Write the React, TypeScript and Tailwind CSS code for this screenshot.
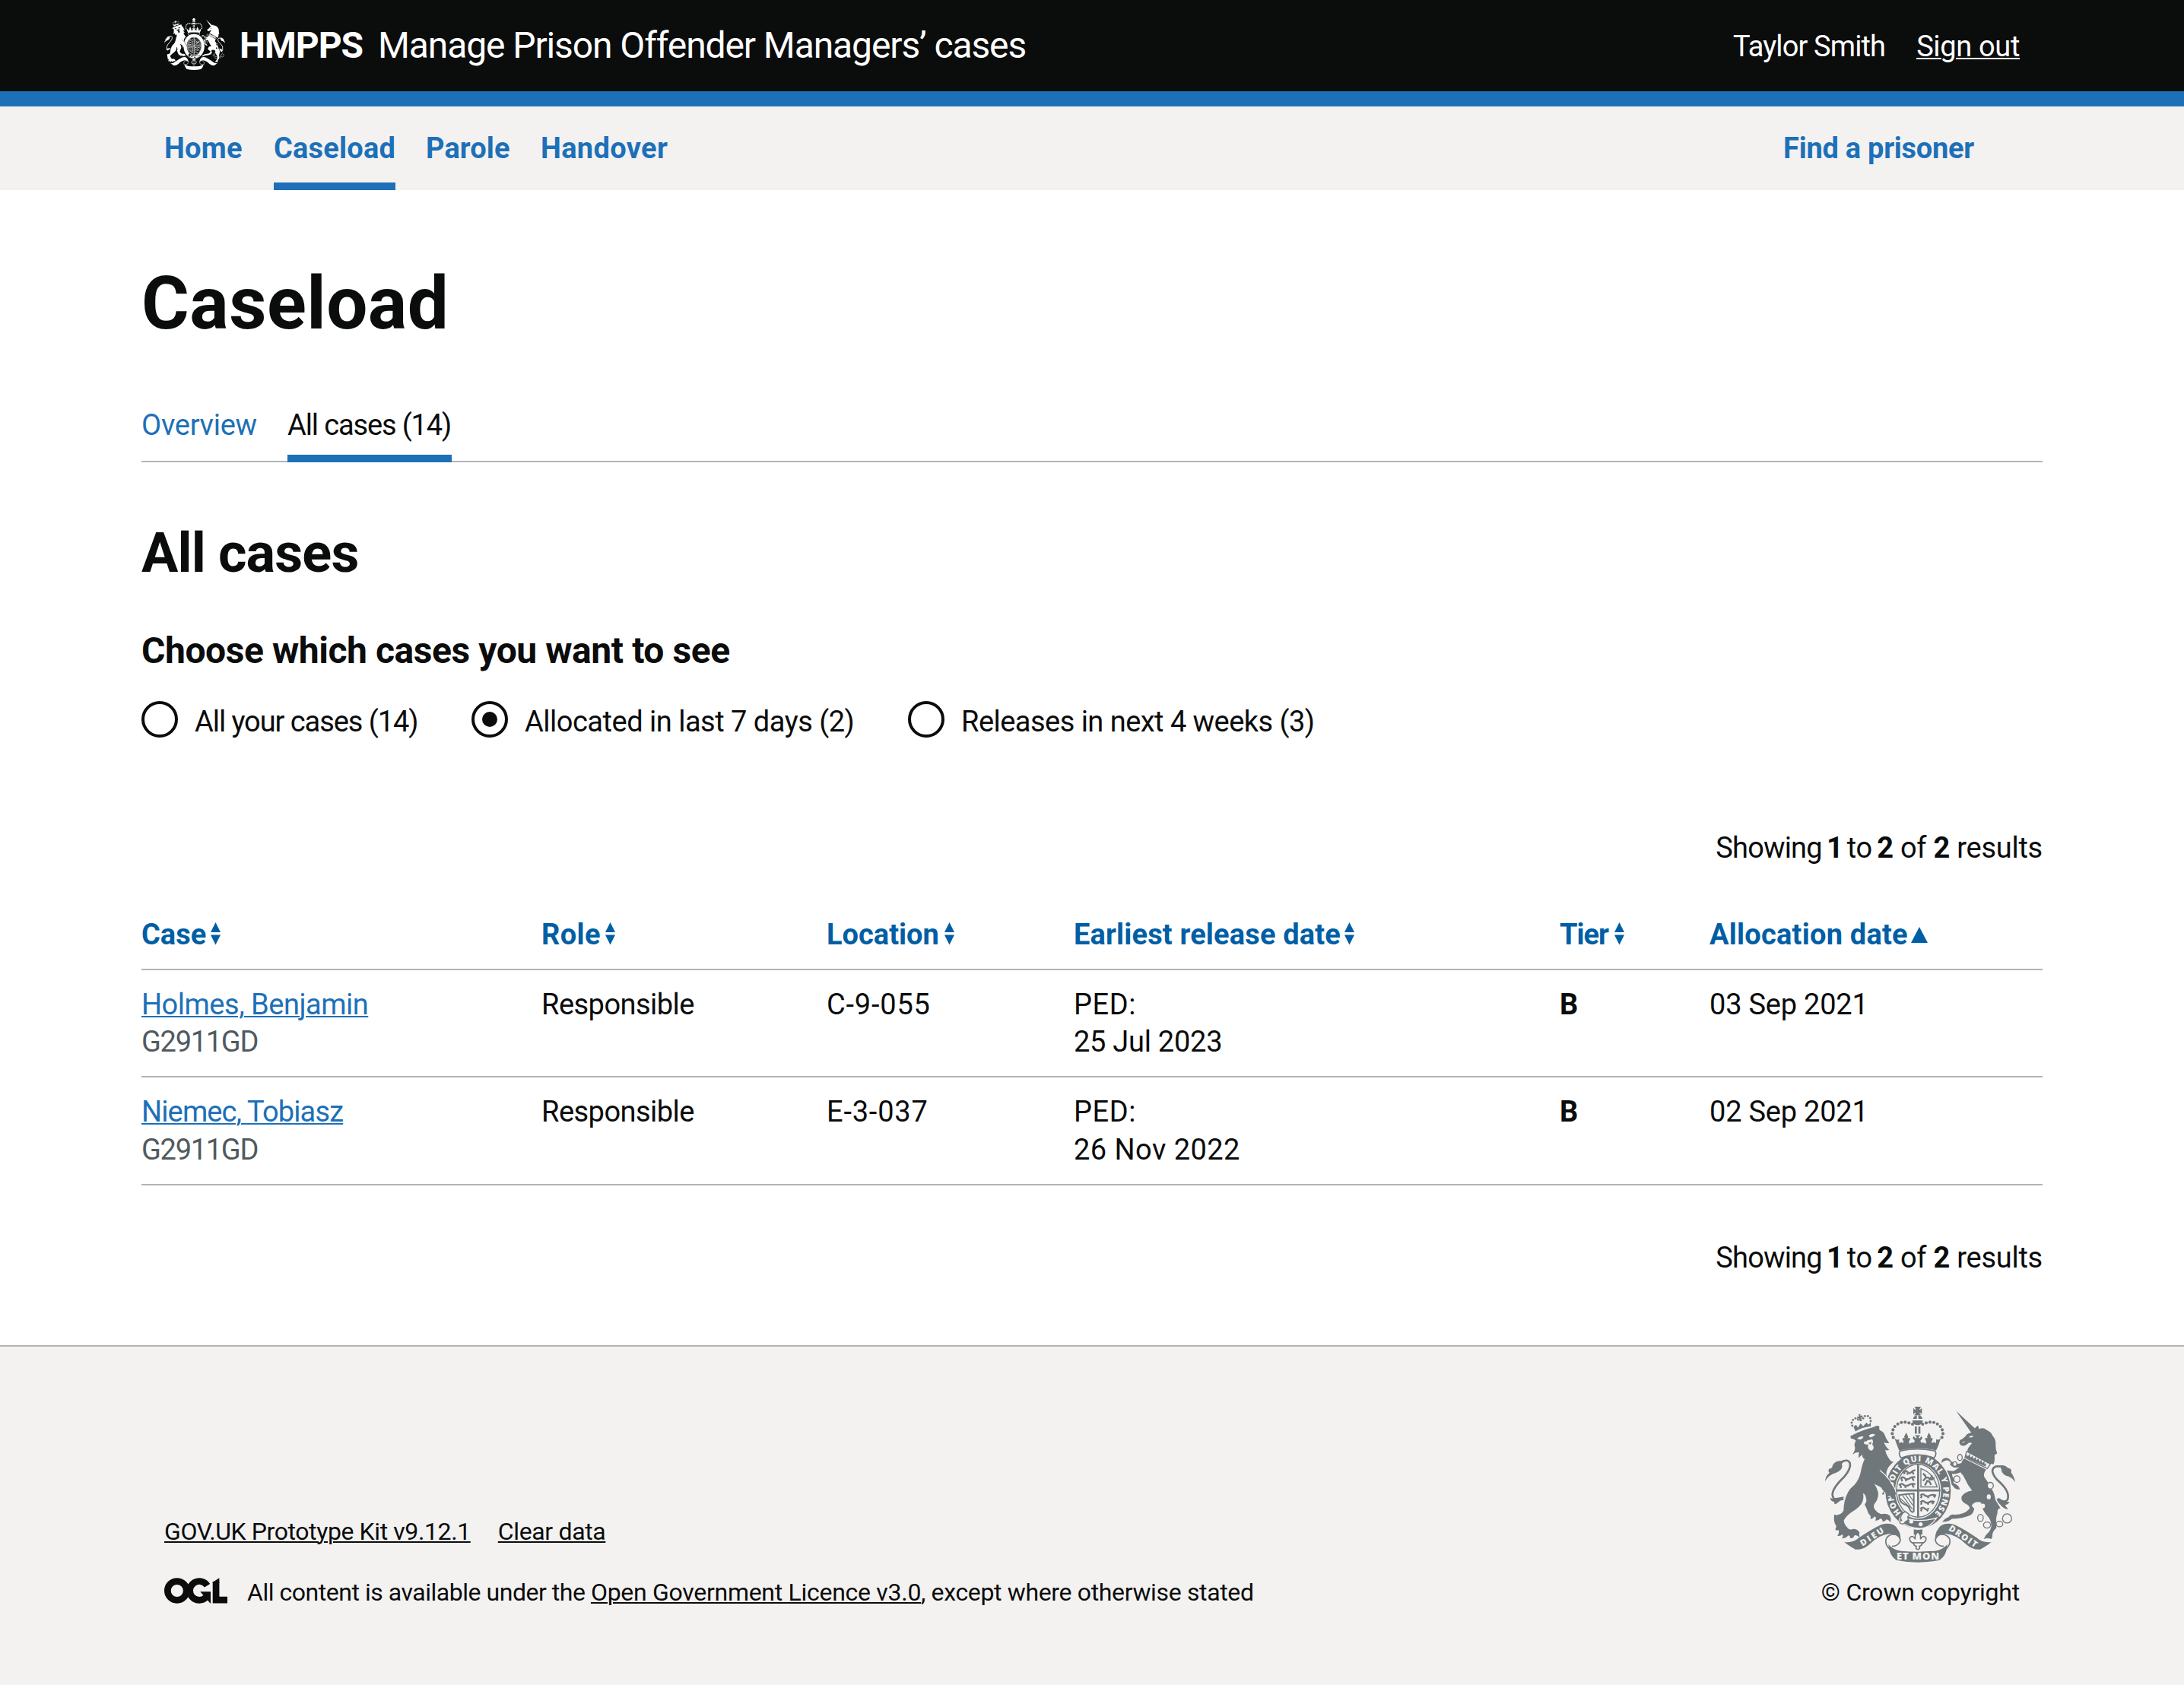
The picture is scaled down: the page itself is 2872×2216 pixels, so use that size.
import type { ReactNode } from 'react';

type CrestProps = { className: string; ground: string; lettered?: boolean };

function CrownDots({ points, r }: { points: [number, number][]; r: number }) {
  return (
    <>
      {points.map(([x, y]) => (
        <circle key={`${x}-${y}`} cx={x} cy={y} r={r} />
      ))}
    </>
  );
}

/** Royal coat of arms; `ground` is the colour showing through the cut-outs. */
function Crest({ className, ground, lettered = false }: CrestProps) {
  return (
    <svg
      className={className}
      viewBox="60 62 750 614"
      preserveAspectRatio="none"
      fill="currentColor"
      aria-hidden="true"
    >
      <defs>
        <path id="garter-line" d="M362 482 A98 116 0 0 1 427 278 A98 116 0 0 1 492 482" />
      </defs>

      {/* lion: crown */}
      <CrownDots
        r={4.4}
        points={[[167, 137], [165, 125], [170, 114], [180, 108], [190, 113], [210, 108], [217, 99], [229, 99], [238, 107], [240, 119]]}
      />
      <path d="M192 92 l8 -1 -1 8 8 -3 2 9 -7 -1 3 14 -8 2 -3 -13 -6 4 -2 -9 8 -1z" />
      <path d="M172 141 L182 133 190 144 200 127 210 139 224 124 230 133 240 124 241 139 Q205 143 180 159Z" />
      {/* lion: head, mane, body and legs */}
      <path d="M160 178 Q185 163 215 153 Q240 146 252 142 Q265 134 274 139 Q272 148 276 155 Q290 161 294 170 Q300 190 313 205 Q303 207 292 202 Q300 222 313 232 Q305 236 297 232 Q302 255 318 274 Q326 282 333 277 Q318 290 310 300 Q300 318 302 330 Q322 352 330 372 Q340 390 338 404 Q334 408 330 410 Q324 415 326 425 Q318 422 317 412 Q306 420 303 413 Q307 407 300 403 Q287 412 284 406 Q294 396 290 386 Q272 374 254 366 Q268 386 270 406 Q270 428 254 446 Q250 458 256 466 Q270 484 284 485 Q305 480 316 492 Q322 504 318 518 Q310 506 302 506 Q296 516 287 514 Q286 504 278 502 Q268 513 258 510 Q264 498 256 494 Q244 506 238 503 Q244 492 232 484 Q224 462 216 446 Q226 438 222 424 Q220 408 210 403 Q214 424 206 440 Q196 458 170 474 Q144 490 134 510 Q134 524 148 538 Q156 550 168 544 Q188 542 196 558 Q192 566 197 577 Q184 566 176 569 Q170 584 158 579 Q160 570 152 569 Q140 582 126 581 Q134 570 128 565 Q118 574 108 570 Q118 558 113 548 Q103 552 100 545 Q108 534 100 525 Q92 508 97 486 Q104 492 112 487 Q128 484 133 470 Q134 430 150 400 Q158 384 176 370 Q194 350 200 322 Q206 290 216 268 Q204 262 208 250 Q196 260 192 264 Q192 250 194 242 Q180 240 168 250 Q180 232 178 222 Q172 210 182 196 Q172 186 162 188Z" />
      <g fill={ground}>
        <path d="M186 187 Q200 176 212 180 Q206 192 194 191Z" />
        <path d="M232 176 Q246 164 258 172 Q250 182 238 183Z" />
        <path d="M214 198 Q224 202 228 194 Q238 192 246 190 Q252 200 246 210 Q256 222 248 232 Q240 240 232 228 Q226 218 232 210 Q222 212 214 208Z" />
      </g>
      <path d="M230 205 l14 -4 -4 10z" />
      {/* lion: tail */}
      <path d="M124 280 Q150 266 158 284 Q164 305 134 340 Q90 382 89 408 Q92 436 122 424" fill="none" stroke="currentColor" strokeWidth="8" />
      <path d="M60 356 Q62 334 78 322 Q70 318 76 306 Q84 308 88 300 Q92 280 112 276 Q124 274 136 278 Q122 286 128 296 Q126 312 104 322 Q74 330 60 356Z" />
      <path d="M80 420 Q92 428 100 422 L134 416 Q130 426 134 430 Q120 430 110 440 Q104 446 96 446 Q100 438 92 436 Q82 434 80 420Z" />

      {/* unicorn: horn, head and mane */}
      <path d="M576 78 L656 152 638 166Z" />
      <path d="M638 164 Q650 152 652 146 Q658 138 664 136 Q664 144 668 150 Q684 142 698 154 Q716 162 722 178 Q734 190 733 212 Q732 230 739 246 Q730 248 728 256 Q732 272 724 290 Q716 284 708 290 L622 240 Q618 228 640 206 Q628 200 620 210 Q608 220 596 214 Q586 206 592 194 Q612 184 618 172 Q626 166 638 164Z" />
      <path d="M626 182 q10 -8 20 -4 q-6 8 -20 4z M596 204 l14 -6 1 4z" fill={ground} />
      {/* unicorn: collar */}
      <path d="M618 238 L712 288 700 306 612 262Z" fill={ground} stroke="currentColor" strokeWidth="4" />
      <path d="M614 262 l4 -12 6 8 6 -12 4 16 8 -6 4 12 8 -8 3 13 8 -7 4 13 8 -8 2 13 10 -7 0 13 8 -6 -4 14z" />
      {/* unicorn: body and legs */}
      <path d="M608 266 L696 310 Q684 322 688 338 Q706 362 716 384 Q728 400 732 430 Q742 446 752 462 Q738 462 740 482 Q732 500 736 540 Q722 552 720 566 Q722 574 716 583 Q700 578 686 583 Q692 568 704 558 Q714 548 716 530 Q714 506 700 492 Q680 470 676 440 Q664 434 650 440 Q630 450 648 462 Q648 478 636 488 Q608 502 560 504 Q548 516 522 516 Q534 500 548 496 Q556 484 570 487 Q608 488 630 464 Q632 452 614 444 Q596 436 598 418 Q606 398 640 392 Q622 370 614 350 Q606 332 594 320 Q574 330 560 326 Q562 340 568 348 L566 362 Q590 372 592 388 Q572 388 568 378 Q552 364 546 346 Q536 330 532 312 Q552 314 566 316 Q584 306 590 300 Q570 306 560 296 Q548 290 556 284 Q548 270 536 274 Q526 276 520 284 Q518 266 534 264 Q548 262 556 276 Q566 280 568 286 Q580 290 598 284 Q602 272 608 266Z" />
      {/* unicorn: tail */}
      <path d="M752 298 Q722 292 720 316 Q724 340 752 362 Q790 398 780 428 Q768 444 742 424" fill="none" stroke="currentColor" strokeWidth="8" />
      <path d="M810 360 Q806 336 794 322 Q798 304 782 304 Q770 288 744 294 Q758 304 756 316 Q764 334 782 336 Q800 342 810 360Z" />
      <path d="M736 424 Q752 432 788 438 Q782 448 770 450 Q778 460 782 466 Q760 462 752 448 Q742 442 736 424Z" />
      {/* chain */}
      <g fill="none" stroke="currentColor" strokeWidth="4">
        <ellipse cx="592" cy="262" rx="9" ry="12" fill={ground} />
        <ellipse cx="572" cy="288" rx="8" ry="9" fill={ground} />
        <ellipse cx="580" cy="347" rx="12" ry="13" fill={ground} />
        <ellipse cx="712" cy="373" rx="12" ry="13" fill={ground} />
        <ellipse cx="673" cy="500" rx="11" ry="14" fill={ground} />
        <ellipse cx="699" cy="528" rx="14" ry="12" fill={ground} />
        <ellipse cx="748" cy="524" rx="13" ry="11" />
        <circle cx="778" cy="502" r="18" />
      </g>
      <ellipse cx="706" cy="417" rx="8" ry="10" fill={ground} />
      <ellipse cx="683" cy="453" rx="8" ry="9" fill={ground} />

      {/* crown */}
      <path d="M413 62 h26 q-7 8 -7 12 q4 0 10 -7 v25 q-6 -7 -10 -7 q0 4 7 11 h-28 q7 -7 7 -11 q-5 0 -10 7 v-25 q5 7 10 7 q0 -4 -5 -12z" />
      <path d="M422 96 h6 v14 h17 q-4 -12 -14 -14 h-12 q-10 4 -12 14 h15z" />
      <path d="M405 116 h40 v6 q-6 13 -20 13 q-14 0 -20 -13z" />
      <path d="M414 140 h8 v28 h-8z M428 140 h8 v28 h-8z" />
      <CrownDots
        r={6.2}
        points={[[405, 131], [391, 126], [376, 123], [361, 124], [347, 130], [335, 140], [328, 153], [325, 168], [329, 183], [445, 131], [459, 126], [474, 123], [489, 124], [503, 130], [515, 140], [522, 153], [525, 168], [521, 183]]}
      />
      <path d="M334 186 Q344 196 352 190 V206 Q362 198 368 206 Q372 200 366 192 Q364 182 374 186 L372 180 380 164 388 180 386 186 Q398 182 394 194 Q388 200 394 208 Q402 200 410 204 Q418 194 408 190 Q404 184 410 178 Q418 190 421 184 Q420 178 414 174 H436 Q430 178 429 184 Q432 190 440 178 Q446 184 442 190 Q432 194 440 204 Q448 200 456 208 Q462 200 456 194 Q452 182 464 186 L462 180 470 164 478 180 476 186 Q486 182 484 192 Q478 200 482 206 Q488 198 498 206 V190 Q506 196 516 186 Q508 216 498 234 Q426 218 352 234 Q344 214 334 186Z" />

      {/* garter */}
      <ellipse cx="427" cy="394" rx="110" ry="128" fill={ground} stroke={ground} strokeWidth="48" />
      <ellipse cx="427" cy="394" rx="110" ry="128" fill="none" stroke="currentColor" strokeWidth={38} />
      <path d="M356 236 Q426 222 494 236 Q502 250 490 264 Q426 240 360 264 Q348 250 356 236Z" fill={ground} stroke="currentColor" strokeWidth="5" />
      {lettered && (
        <text fill={ground} fontFamily="Open Sans, sans-serif" fontWeight="800" fontSize="32">
          <textPath href="#garter-line" textLength="530" lengthAdjust="spacing" startOffset="2">
            HONI SOIT QUI MAL Y PENSE
          </textPath>
        </text>
      )}
      {/* paw over the garter */}
      <path d="M280 318 Q320 352 340 404 Q334 410 328 426 Q320 422 317 412 Q306 420 303 413 Q307 407 300 403 L284 386Z" />
      <path d="M276 312 Q320 346 341 398" fill="none" stroke={ground} strokeWidth="3.5" />

      {/* quartered shield */}
      <ellipse cx="427" cy="393" rx="85" ry="104" fill="none" stroke="currentColor" strokeWidth="4" />
      <path d="M423 288 h8 v210 h-8z M340 388 h175 v8 h-175z" />
      <g fill="none" stroke="currentColor" strokeWidth="7" strokeLinejoin="round">
        <path d="M372 322 q8 -12 14 -2 q6 8 14 0 t16 -8 M368 314 l6 14 M388 318 l-4 12 M404 318 l6 10" />
        <path d="M358 346 q8 -12 16 -2 q10 8 20 0 t22 -4 M360 342 l4 14 M382 344 l-4 12 M404 342 l6 12" />
        <path d="M352 372 q10 -12 18 -2 q10 8 22 0 t24 -2 M356 368 l4 14 M380 370 l-4 12 M404 368 l6 12" />
        <path d="M436 412 q10 -10 18 0 q10 6 20 0 t24 0 M442 412 l-4 10 M464 414 l4 8 M488 412 l6 8" />
        <path d="M436 438 q10 -10 18 0 q10 6 18 0 t20 0 M442 438 l-4 10 M464 440 l4 8 M482 438 l4 8" />
        <path d="M436 464 q10 -10 18 0 q6 6 16 -2 M442 464 l-4 10 M460 466 l6 8" />
        <path d="M446 326 q10 4 12 16 q12 -4 14 6 l12 -14 M458 342 l-12 12 M460 354 q12 -2 18 16 M462 356 l-8 16 M470 348 q16 4 20 -8" />
      </g>
      <path d="M438 306 Q486 322 502 378 H438Z" fill="none" stroke="currentColor" strokeWidth="4" />
      <path d="M352 410 Q380 406 410 404 L410 474 Q404 482 396 470 Q390 450 372 446 Q352 438 352 410Z" fill="none" stroke="currentColor" strokeWidth="6" />
      <path d="M366 412 L404 466 M378 410 L406 450 M390 408 L408 434 M358 424 L394 458" fill="none" stroke="currentColor" strokeWidth="3.5" />

      {/* buckle and strap end */}
      <path d="M358 492 Q420 524 500 500 Q476 538 436 542 Q388 540 352 512Z" stroke={ground} strokeWidth="4" />
      <path d="M366 482 Q376 470 386 482 Q396 486 386 496 Q392 510 378 514 Q368 530 356 520 Q350 512 362 510 Q352 498 366 482Z" fill={ground} stroke="currentColor" strokeWidth="4" />
      <circle cx="400" cy="514" r="8" fill={ground} />
      <circle cx="437" cy="525" r="8" fill={ground} />
      <path d="M410 545 Q428 550 444 545 V566 H410Z" />
      <path d="M426 556 Q440 566 436 584 Q446 566 458 578 Q460 594 444 600 Q440 610 432 612 Q436 624 426 624 Q416 624 420 612 Q412 610 408 600 Q392 594 394 578 Q406 566 416 584 Q412 566 426 556Z" fill={ground} stroke="currentColor" strokeWidth="5" />
      <path d="M404 598 H448" stroke="currentColor" strokeWidth="5" />

      {/* motto ribbon */}
      <g>
        <path d="M332 562 Q356 572 357 588 Q352 610 324 612 M320 628 Q292 604 302 580 Q316 560 340 566" fill="none" stroke="currentColor" strokeWidth="5" />
        <path d="M136 595 Q170 600 194 578 Q240 546 282 526 Q330 514 346 544 Q358 558 358 584 Q344 560 316 562 Q270 568 238 602 Q210 628 180 624 Q156 612 136 595Z" />
        <path d="M520 562 Q496 572 495 588 Q500 610 528 612 M532 628 Q560 604 550 580 Q536 560 512 566" fill="none" stroke="currentColor" strokeWidth="5" />
        <path d="M716 595 Q682 600 658 578 Q612 546 570 526 Q522 514 506 544 Q494 558 494 584 Q508 560 536 562 Q582 568 614 602 Q642 628 672 624 Q696 612 716 595Z" />
        <path d="M310 604 Q330 628 360 630 Q426 636 492 630 Q522 628 542 604 Q540 650 512 666 Q426 684 340 666 Q314 650 310 604Z" />
      </g>
      {lettered && (
        <g fill={ground} fontFamily="Open Sans, sans-serif" fontWeight="800" fontSize="34" textAnchor="middle">
          <text transform="translate(251 584) rotate(-33)" textLength="104">DIEU</text>
          <text x="426" y="665" fontSize="39" textLength="168">ET MON</text>
          <text transform="translate(598 582) rotate(34)" textLength="128">DROIT</text>
        </g>
      )}
    </svg>
  );
}

function OglLogo() {
  return (
    <svg className="mt-px h-[34px] w-[83px] shrink-0" viewBox="0 0 483.2 195.7" fill="none" stroke="currentColor" strokeWidth="50.7">
      <circle cx="97.8" cy="97.8" r="72.4" />
      <path d="M329.3 58.7A72.4 72.4 0 1 0 319.3 149" />
      <path d="M275 105.8h80v87.8h-3z" fill="currentColor" stroke="none" />
      <path d="M396.2 30v138.2h87" />
      <path d="M370.8 32.4L421.5 0v40h-50.7z" fill="currentColor" stroke="none" />
    </svg>
  );
}

function SortBoth() {
  return (
    <svg className="mt-[9px] h-[30px] w-[13px]" viewBox="0 0 13 30" fill="currentColor">
      <path d="M6.5 0L13 13H0zM0 16.5h13L6.5 29.5z" />
    </svg>
  );
}

function SortUp() {
  return (
    <svg className="mt-[15px] h-[21px] w-[22px]" viewBox="0 0 22 21" fill="currentColor">
      <path d="M11 0L22 21H0z" />
    </svg>
  );
}

function HeaderCell({ label, className, children }: { label: string; className: string; children: ReactNode }) {
  return (
    <th scope="col" className="p-0 pb-5 text-left align-top font-bold text-[#005ea5]">
      <span className={`flex items-start ${className}`}>
        <span>{label}</span>
        {children}
      </span>
    </th>
  );
}

function Radio({ label, checked = false, className }: { label: string; checked?: boolean; className: string }) {
  return (
    <div className={`flex gap-[22px] ${className}`}>
      <span className="flex size-12 shrink-0 items-center justify-center rounded-full border-4 border-[#0b0c0c]">
        {checked && <span className="size-5 rounded-full bg-[#0b0c0c]" />}
      </span>
      <span className="mt-0.5 whitespace-nowrap">{label}</span>
    </div>
  );
}

function Showing() {
  return (
    <p className="text-right tracking-[-0.0065em]">
      <span className="tracking-[-0.022em]">Showing</span> <b className="-mr-1 -ml-[3px]">1</b> to{' '}
      <b className="-ml-[3px]">2</b> of <b>2</b> results
    </p>
  );
}

const rows = [
  { name: 'Holmes, Benjamin', nameClass: 'tracking-[-0.013em]', location: 'C-9-055', date: '25 Jul 2023', dateClass: 'tracking-[-0.007em]', allocated: '03 Sep 2021', height: 'h-[141px]', second: 'leading-[49px]' },
  { name: 'Niemec, Tobiasz', nameClass: 'tracking-[-0.023em]', location: 'E-3-037', date: '26 Nov 2022', dateClass: 'tracking-[0.012em]', allocated: '02 Sep 2021', height: 'h-[142px]', second: 'leading-[50px]' },
];

const link = 'underline decoration-2 underline-offset-[2px]';

export default function App() {
  return (
    <div className="flex min-h-[2216px] w-[2872px] flex-col bg-white font-[Roboto,sans-serif] text-[38px] leading-[50px] text-[#0b0c0c]">
      <header className="h-[140px] border-b-[20px] border-[#1d70b8] bg-[#0b0c0c] px-[216px] text-white">
        <div className="flex items-start">
          <Crest className="mt-6 h-[68px] w-20" ground="#0b0c0c" />
          <span className="mt-[30px] ml-[19px] w-[182px] text-[48px] leading-[60px] font-bold tracking-[-0.022em]">HMPPS</span>
          <span className="mt-[30px] text-[48px] leading-[60px] tracking-[-0.023em]">Manage Prison Offender Managers’ cases</span>
          <div className="mt-9 ml-auto flex gap-[41px]">
            <span className="tracking-[-0.023em]">Taylor Smith</span>
            <a className={`${link} tracking-[-0.009em]`}>Sign out</a>
          </div>
        </div>
      </header>

      <nav className="flex h-[110px] bg-[#f3f2f1] px-[216px] pt-[30px] font-bold text-[#1d70b8]">
        <a className="w-[144px] tracking-[0.007em]">Home</a>
        <a className="mr-10 w-40 border-b-[10px] border-[#1d70b8] tracking-[0.005em]">Caseload</a>
        <a className="w-[151px] tracking-[0.003em]">Parole</a>
        <a className="tracking-[0.009em]">Handover</a>
        <a className="mr-[60px] ml-auto tracking-[-0.007em]">Find a prisoner</a>
      </nav>

      <main className="px-[186px] pb-[90px]">
        <h1 className="mt-[99px] text-[96px] leading-[100px] font-bold tracking-[0.005em]">Caseload</h1>

        <div className="mt-[85px] flex h-[74px] shadow-[inset_0_-2px_0_#b1b4b6]">
          <a className="w-48 tracking-[-0.007em] text-[#1d70b8]">Overview</a>
          <a className="w-[216px] border-b-[10px] border-[#1d70b8] tracking-[-0.03em] whitespace-nowrap">All cases (14)</a>
        </div>

        <h2 className="mt-20 text-[72px] leading-[80px] font-bold tracking-[-0.012em]">All cases</h2>

        <h3 className="mt-[58px] text-[48px] leading-[60px] font-bold tracking-[-0.009em]">Choose which cases you want to see</h3>
        <div className="mt-9 flex h-[50px]">
          <Radio label="All your cases (14)" className="w-[434px] tracking-[-0.028em]" />
          <Radio label="Allocated in last 7 days (2)" checked className="w-[574px] tracking-[-0.013em]" />
          <Radio label="Releases in next 4 weeks (3)" className="tracking-[-0.014em]" />
        </div>

        <div className="mt-[118px]">
          <Showing />
        </div>

        <table className="mt-16 w-[2500px] table-fixed border-collapse">
          <colgroup>
            <col className="w-[526px]" />
            <col className="w-[375px]" />
            <col className="w-[325px]" />
            <col className="w-[639px]" />
            <col className="w-[197px]" />
            <col className="w-[438px]" />
          </colgroup>
          <thead>
            <tr className="h-[72px] shadow-[inset_0_-2px_0_#b1b4b6]">
              <HeaderCell label="Case" className="gap-[6px]"><SortBoth /></HeaderCell>
              <HeaderCell label="Role" className="gap-[6px] tracking-[0.01em]"><SortBoth /></HeaderCell>
              <HeaderCell label="Location" className="gap-[7px]"><SortBoth /></HeaderCell>
              <HeaderCell label="Earliest release date" className="gap-[5px] tracking-[0.004em]"><SortBoth /></HeaderCell>
              <HeaderCell label="Tier" className="gap-[8px] tracking-[-0.027em]"><SortBoth /></HeaderCell>
              <HeaderCell label="Allocation date" className="gap-[4px] tracking-[0.006em]"><SortUp /></HeaderCell>
            </tr>
          </thead>
          <tbody>
            {rows.map((row) => (
              <tr key={row.name} className={`${row.height} align-top shadow-[inset_0_-2px_0_#b1b4b6]`}>
                <td className="p-0 pt-5">
                  <a className={`${link} ${row.nameClass} text-[#1d70b8]`}>{row.name}</a>
                  <div className={`${row.second} tracking-[-0.034em] text-[#505a5f]`}>G2911GD</div>
                </td>
                <td className="p-0 pt-5 tracking-[-0.014em]">Responsible</td>
                <td className="p-0 pt-5 tracking-[0.021em]">{row.location}</td>
                <td className="p-0 pt-5">
                  <div className="tracking-[0.015em]">PED:</div>
                  <div className={`${row.second} ${row.dateClass}`}>{row.date}</div>
                </td>
                <td className="p-0 pt-5 font-bold">B</td>
                <td className="p-0 pt-5 tracking-[-0.006em]">{row.allocated}</td>
              </tr>
            ))}
          </tbody>
        </table>

        <div className="mt-[70px]">
          <Showing />
        </div>
      </main>

      <footer className="flex grow items-start justify-between border-t-2 border-[#b1b4b6] bg-[#f3f2f1] px-[216px] text-[32px] leading-[40px]">
        <div className="mt-[223px]">
          <div className="flex gap-9">
            <a className={`${link} tracking-[-0.0125em]`}>GOV.UK Prototype Kit v9.12.1</a>
            <a className={`${link} tracking-[-0.011em]`}>Clear data</a>
          </div>
          <div className="mt-10 flex gap-[26px]">
            <OglLogo />
            <p>
              <span className="tracking-[-0.0147em]">All content is available under the </span>
              <a className={`${link} tracking-[-0.009em]`}>Open Government Licence v3.0</a>
              <span className="tracking-[-0.011em]">, except where otherwise stated</span>
            </p>
          </div>
        </div>
        <div className="mt-[79px] flex flex-col items-center">
          <Crest className="h-[205px] w-[250px] text-[#6f777b]" ground="#f3f2f1" lettered />
          <p className="mt-[19px] tracking-[-0.007em]">© Crown copyright</p>
        </div>
      </footer>
    </div>
  );
}
